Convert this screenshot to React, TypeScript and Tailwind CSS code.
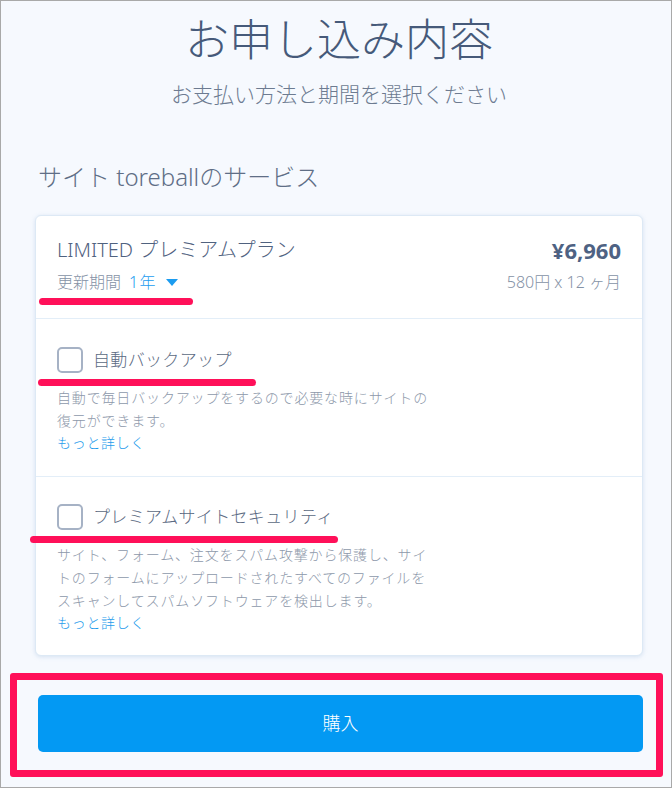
import React from 'react';

const Mark: React.FC<{ className: string }> = ({ className }) => (
  <div className={`absolute h-[7px] rounded-full bg-[#ff1059] ${className}`} />
);

const Addon: React.FC<{ label: string; lines: string[]; markWidth: string; markLeft: string; last?: boolean }> = ({
  label,
  lines,
  markWidth,
  markLeft,
  last,
}) => (
  <div className={`px-[21px] ${last ? 'pb-[21px] pt-[27px]' : 'pb-[22px] pt-[28px] border-b border-[#e3eef8]'}`}>
    <div className="relative flex items-center gap-[10px]">
      <div className="h-[26px] w-[26px] rounded-[5px] border-2 border-[#a6b2c5] bg-white" />
      <span className="text-[17px] text-[#5b6a82] tracking-[0.02em]">{label}</span>
      <Mark className={`top-[32px] ${markLeft} ${markWidth}`} />
    </div>
    <p className="mt-[13px] text-[14px] leading-[23px] tracking-[0.06em] text-[#8d98aa]">
      {lines.map((l, i) => (
        <React.Fragment key={i}>
          {l}
          <br />
        </React.Fragment>
      ))}
    </p>
    <a className="block text-[14px] leading-[22px] tracking-[0.05em] text-[#1e9cec]">もっと詳しく</a>
  </div>
);

export default function App() {
  return (
    <div
      className="box-border h-[788px] w-[672px] overflow-hidden border border-[#a9a9a9] bg-[#f6f9fe] pl-[34px] pr-[28px] font-light"
      style={{ fontFamily: '"Noto Sans", "Noto Sans CJK JP", sans-serif' }}
    >
      <h1 className="pt-[12px] text-center text-[44px] leading-[53px] text-[#465a7a]">お申し込み内容</h1>
      <p className="mt-[13px] text-center text-[21px] leading-[30px] text-[#6d7b91]">お支払い方法と期間を選択ください</p>
      <h2 className="ml-[3px] mt-[52px] text-[24px] leading-[32px] text-[#5f6e86]">サイト toreballのサービス</h2>

      <div className="mt-[22px] rounded-[6px] border border-[#dde9f5] bg-white shadow-[0_1px_4px_rgba(150,180,215,0.35)]">
        <div className="border-b border-[#e3eef8] px-[21px] pb-[24px] pt-[20px]">
          <div className="flex items-center justify-between">
            <span className="text-[20px] leading-[28px] text-[#50627f]">LIMITED プレミアムプラン</span>
            <span className="text-[22px] font-bold leading-[28px] text-[#4e6283]">¥6,960</span>
          </div>
          <div className="relative mt-[6px] flex items-center justify-between">
            <div className="flex items-center text-[16px] leading-[24px]">
              <span className="text-[#8592a6]">更新期間</span>
              <span className="ml-[8px] tracking-[0.08em] text-[#1b9cf0]">1年</span>
              <svg className="ml-[9px]" width="12" height="7" viewBox="0 0 12 7">
                <path d="M0 0h12L6 7z" fill="#1b9cf0" />
              </svg>
              <Mark className="-left-[18px] top-[28px] w-[154px]" />
            </div>
            <span className="text-[16px] leading-[24px] text-[#8592a6]">580円 x 12 ヶ月</span>
          </div>
        </div>

        <Addon
          label="自動バックアップ"
          lines={['自動で毎日バックアップをするので必要な時にサイトの', '復元ができます。']}
          markLeft="-left-[19px]"
          markWidth="w-[218px]"
        />
        <Addon
          label="プレミアムサイトセキュリティ"
          lines={[
            'サイト、フォーム、注文をスパム攻撃から保護し、サイ',
            'トのフォームにアップロードされたすべてのファイルを',
            'スキャンしてスパムソフトウェアを検出します。',
          ]}
          markLeft="-left-[27px]"
          markWidth="w-[308px]"
          last
        />
      </div>

      <div className="relative ml-[3px] mt-[39px]">
        <div className="pointer-events-none absolute -bottom-[25px] -left-[28px] -right-[20px] -top-[22px] rounded-[3px] border-[7px] border-[#ff1059]" />
        <button className="flex h-[57px] w-full items-center justify-center rounded-[5px] bg-[#0399f3] text-[18px] font-light text-white">
          購入
        </button>
      </div>
    </div>
  );
}
